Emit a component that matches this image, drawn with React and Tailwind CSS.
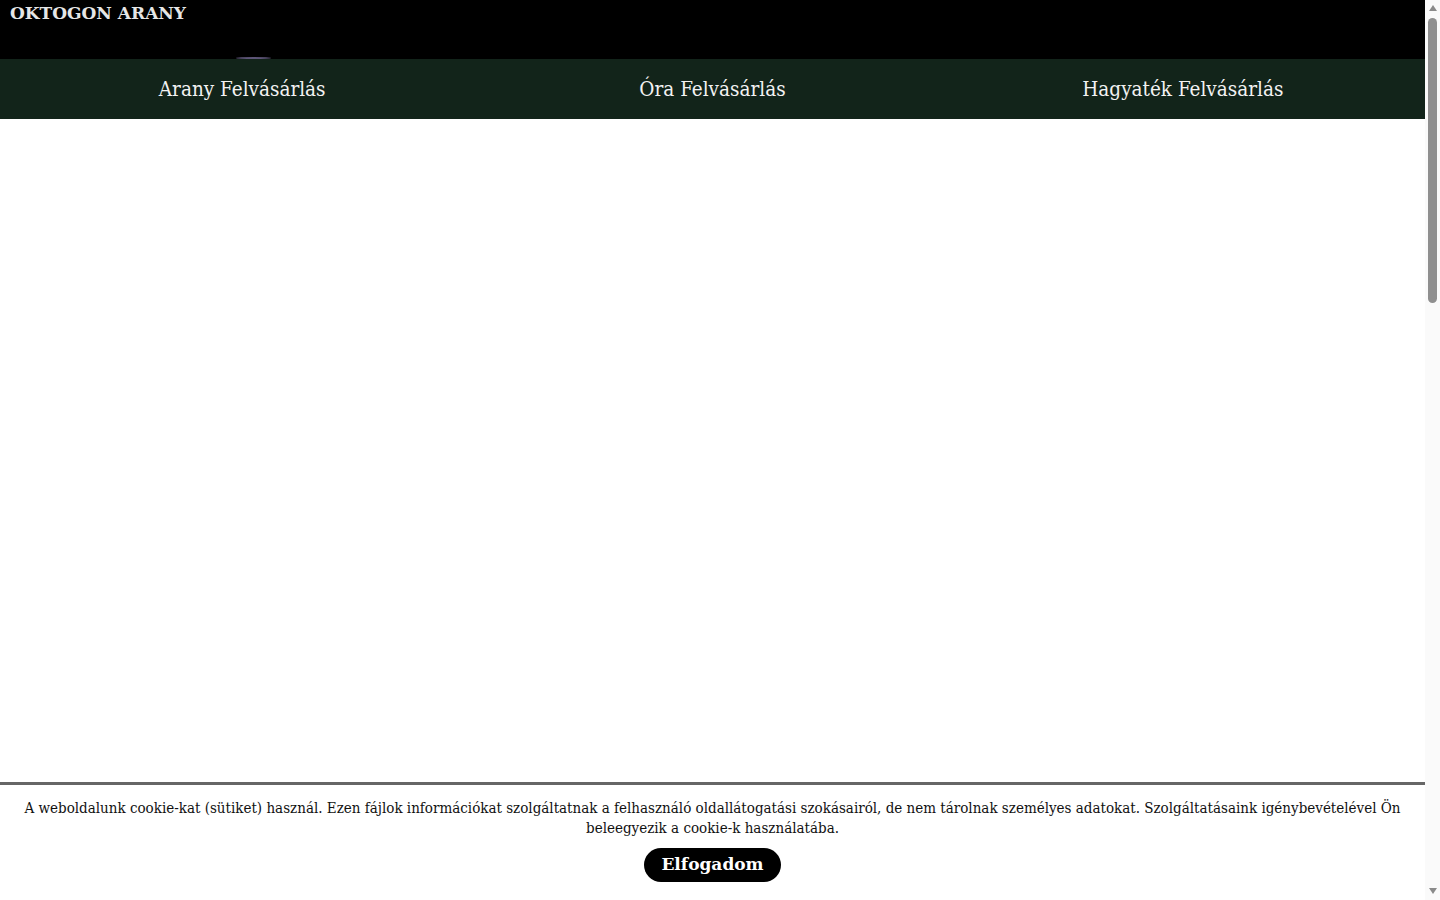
export default function App() {
  const links = ["Arany Felvásárlás", "Óra Felvásárlás", "Hagyaték Felvásárlás"];

  return (
    <div className="min-h-[2700px] bg-white pr-[15px]" style={{ fontFamily: "'DejaVu Serif', serif" }}>
      {/* Top bar */}
      <header className="relative h-[59px] bg-black">
        <div className="px-[10px] pt-[1px] text-[17px] font-bold leading-6 text-[#e6e6e6]">
          OKTOGON ARANY
        </div>
        {/* logo edge peeking from under the nav */}
        <div className="absolute left-[236px] top-[57px] h-[2px] w-[35px] rounded-[50%] bg-[#5d5577]" />
      </header>

      {/* Nav */}
      <nav className="relative grid h-[60px] grid-cols-3 bg-[#12241a] px-[7px]">
        {links.map((l) => (
          <a
            key={l}
            href="#"
            className="flex items-center justify-center text-[20.5px] text-[#f2f2f2]"
            style={{ fontFamily: "'DejaVu Serif Condensed', 'DejaVu Serif', serif" }}
          >
            {l}
          </a>
        ))}
      </nav>

      {/* Cookie notice */}
      <div className="fixed bottom-0 left-0 right-[15px] border-t-[3px] border-[#666666] bg-white px-6 pt-[13px] pb-[18px] text-center">
        <p
          className="text-[15px] leading-5 text-[#111]"
          style={{ fontFamily: "'DejaVu Serif Condensed', 'DejaVu Serif', serif" }}
        >
          A weboldalunk cookie-kat (sütiket) használ. Ezen fájlok információkat szolgáltatnak a felhasználó oldallátogatási szokásairól, de nem tárolnak személyes adatokat. Szolgáltatásaink igénybevételével Ön beleegyezik a cookie-k használatába.
        </p>
        <button className="mt-[10px] h-[34px] rounded-full bg-black px-[17px] text-[17px] font-bold text-white">
          Elfogadom
        </button>
      </div>

      {/* Scrollbar */}
      <div className="fixed right-0 top-0 bottom-0 flex w-[15px] flex-col items-center bg-[#fafafa]">
        <div className="mt-[5px] h-0 w-0 border-x-[4px] border-b-[6px] border-x-transparent border-b-[#8a8a8a]" />
        <div className="mt-[7px] h-[285px] w-[9px] rounded-full bg-[#8f8f8f]" />
        <div className="flex-1" />
        <div className="mb-[6px] h-0 w-0 border-x-[4px] border-t-[6px] border-x-transparent border-t-[#8a8a8a]" />
      </div>
    </div>
  );
}
